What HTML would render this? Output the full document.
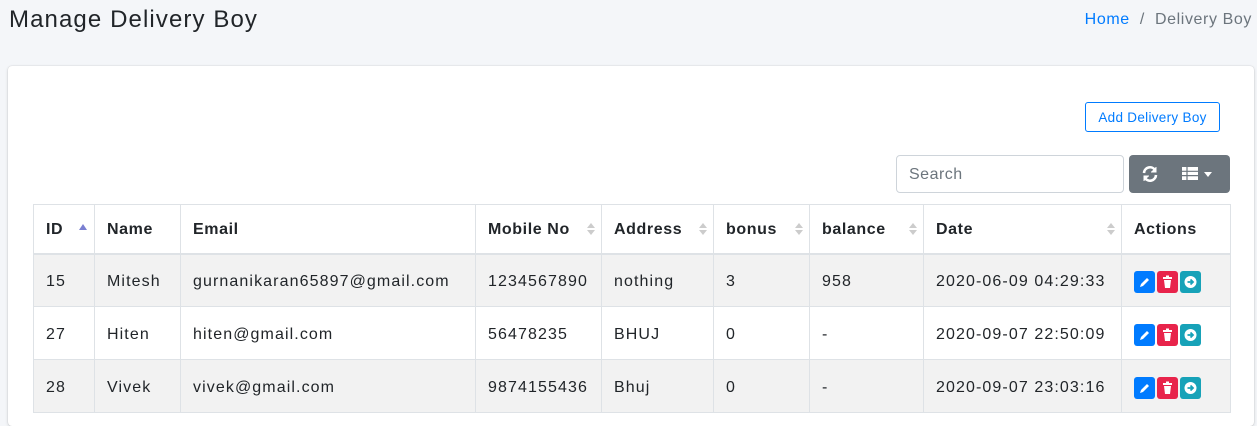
<!DOCTYPE html>
<html><head><style>
*{box-sizing:border-box;margin:0;padding:0}
body{width:1257px;height:413px;overflow:hidden;background:#f4f6f9;font-family:"Liberation Sans",sans-serif;color:#212529;position:relative}
h1{position:absolute;left:9px;top:6px;font-size:24px;font-weight:400;color:#212529;letter-spacing:1.1px}
.bc{position:absolute;right:5px;top:11px;font-size:16px;color:#6c757d;letter-spacing:.6px}
.bc a{color:#007bff}
.card{position:absolute;left:8px;top:66px;width:1246px;height:360px;background:#fff;border-radius:4px;box-shadow:0 0 1px rgba(0,0,0,.2),0 1px 3px rgba(0,0,0,.15)}
.add{position:absolute;left:1085px;top:102px;width:135px;height:30px;border:1px solid #007bff;border-radius:3px;color:#007bff;font-size:13.5px;line-height:29px;text-align:center;letter-spacing:.3px}
.search{position:absolute;left:896px;top:155px;width:228px;height:38px;border:1px solid #ced4da;border-radius:4px;padding-left:12px;line-height:38px;font-size:16px;color:#6c757d;letter-spacing:.5px}
.tb{position:absolute;left:1129px;top:155px;width:101px;height:38px;background:#6c757d;border-radius:4px}
table{position:absolute;left:33px;top:204px;border-collapse:collapse;font-size:16px;letter-spacing:1.1px;table-layout:fixed;width:1197px}
td,th{border:1px solid #dee2e6;padding:0 12px;text-align:left;position:relative;white-space:nowrap}
th{height:49px;font-weight:700;border-bottom:2px solid #dee2e6;letter-spacing:.6px;padding-top:2px}
td{height:53px;padding-top:3px}
tr.o td{background:#f2f2f2}
.s{position:absolute;right:6px;top:18px;width:0;height:0;border-left:4px solid transparent;border-right:4px solid transparent;border-bottom:5px solid #ccc}
.s::after{content:"";position:absolute;left:-4px;top:7px;border-left:4px solid transparent;border-right:4px solid transparent;border-top:5px solid #ccc}
.u{position:absolute;right:7px;top:19px;border-left:4px solid transparent;border-right:4px solid transparent;border-bottom:6px solid #7a7fd1}
.b{display:inline-block;width:21px;height:22px;border-radius:3px;vertical-align:middle;margin-right:2px;position:relative}
.b svg{position:absolute;left:4px;top:4px}
</style></head><body>
<h1>Manage Delivery Boy</h1>
<div class="bc"><a>Home</a> &nbsp;/&nbsp; Delivery Boy</div>
<div class="card"></div>
<div class="add">Add Delivery Boy</div>
<div class="search">Search</div>
<div class="tb">
<svg style="position:absolute;left:12px;top:10px" width="18" height="18" viewBox="0 0 18 18" fill="none" stroke="#fff" stroke-width="2.6"><path d="M3 8a6 6 0 0 1 11-3"/><path d="M15 10a6 6 0 0 1-11 3"/><path d="M15 2v5h-5" fill="#fff" stroke-width="1"/><path d="M3 16v-5h5" fill="#fff" stroke-width="1"/></svg>
<svg style="position:absolute;left:53px;top:12px" width="16" height="13" viewBox="0 0 16 13"><rect width="16" height="13" fill="#fff"/><path d="M0 4.3h16M0 8.6h16M5 0v13" stroke="#6c757d" stroke-width="1.2"/></svg>
<div style="position:absolute;left:75px;top:17px;border-left:4px solid transparent;border-right:4px solid transparent;border-top:5px solid #fff"></div>
</div>
<table>
<colgroup><col style="width:61px"><col style="width:86px"><col style="width:295px"><col style="width:126px"><col style="width:112px"><col style="width:96px"><col style="width:114px"><col style="width:198px"><col style="width:109px"></colgroup>
<tr><th>ID<span class="u"></span></th><th>Name</th><th>Email</th><th>Mobile No<span class="s"></span></th><th>Address<span class="s"></span></th><th>bonus<span class="s"></span></th><th>balance<span class="s"></span></th><th>Date<span class="s"></span></th><th>Actions</th></tr>
<tr class="o"><td>15</td><td>Mitesh</td><td>gurnanikaran65897@gmail.com</td><td>1234567890</td><td>nothing</td><td>3</td><td>958</td><td>2020-06-09 04:29:33</td><td>ACT</td></tr>
<tr><td>27</td><td>Hiten</td><td>hiten@gmail.com</td><td>56478235</td><td>BHUJ</td><td>0</td><td>-</td><td>2020-09-07 22:50:09</td><td>ACT</td></tr>
<tr class="o"><td>28</td><td>Vivek</td><td>vivek@gmail.com</td><td>9874155436</td><td>Bhuj</td><td>0</td><td>-</td><td>2020-09-07 23:03:16</td><td>ACT</td></tr>
</table>
<script>
var a='<span class="b" style="background:#007bff"><svg width="13" height="14" viewBox="0 0 13 14"><path d="M2 12l1-3 6-6 2 2-6 6z" fill="#fff"/></svg></span><span class="b" style="background:#e8244b"><svg width="13" height="14" viewBox="0 0 13 14"><rect x="2" y="2" width="9" height="2" fill="#fff"/><rect x="5" y="0.5" width="3" height="2" fill="#fff"/><path d="M3 5h7l-1 8H4z" fill="#fff"/></svg></span><span class="b" style="background:#17a2b8"><svg width="13" height="14" viewBox="0 0 13 14"><circle cx="6.5" cy="7" r="6" fill="#fff"/><path d="M3.5 7h5M6.5 4.5L9 7l-2.5 2.5" stroke="#17a2b8" stroke-width="1.8" fill="none"/></svg></span>';
document.querySelectorAll('td').forEach(function(t){if(t.textContent=='ACT'){t.innerHTML=a;t.style.letterSpacing='0'}});
</script>
</body></html>
